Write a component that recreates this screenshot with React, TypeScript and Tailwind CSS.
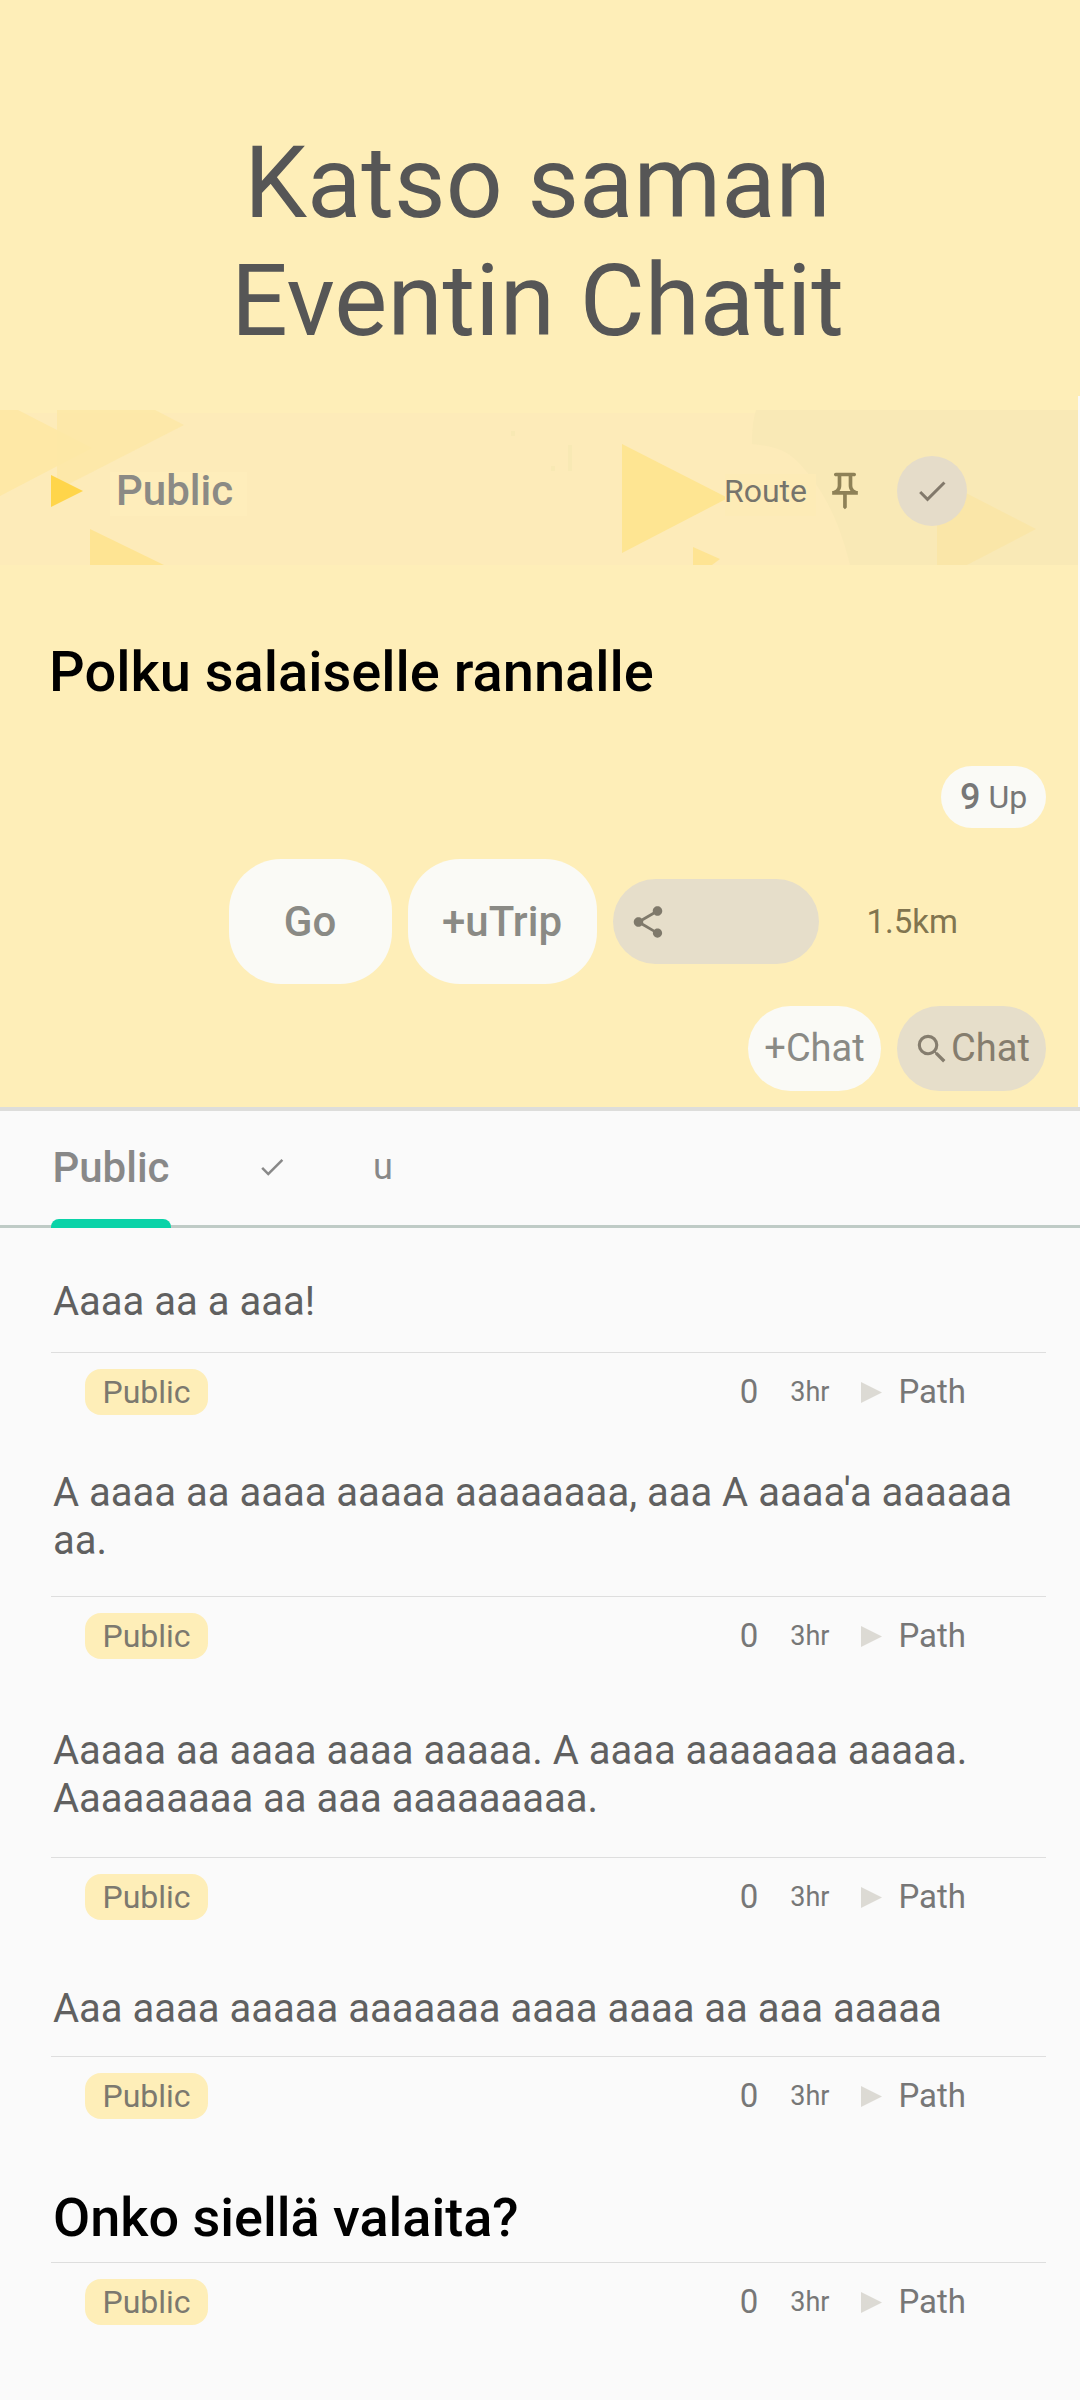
import React, { useState } from "react";
import { MdCheck, MdOutlinePushPin, MdSearch, MdShare } from "react-icons/md";

type Message = { text: string; space: string; strong?: boolean };

const messages: Message[] = [
  { text: "Aaaa aa a aaa!", space: "pt-[50px] pb-[26px]" },
  { text: "A aaaa aa aaaa aaaaa aaaaaaaa, aaa A aaaa'a aaaaaa aa.", space: "pt-[54px] pb-[31px]" },
  { text: "Aaaaa aa aaaa aaaa aaaaa. A aaaa aaaaaaa aaaaa. Aaaaaaaaa aa aaa aaaaaaaaa.", space: "pt-[68px] pb-[34px]" },
  { text: "Aaa aaaa aaaaa aaaaaaa aaaa aaaa aa aaa aaaaa", space: "pt-[65px] pb-[23px]" },
  { text: "Onko siellä valaita?", space: "pt-[67px] pb-3", strong: true },
];

function BannerArt() {
  return (
    <svg aria-hidden="true" viewBox="0 0 1078 155" preserveAspectRatio="none" className="absolute inset-0 w-full h-full">
      <rect y="3" width="1078" height="152" fill="#fdebb9" />
      <polygon points="0,0 18,0 92,38 0,86" fill="#fee8a6" />
      <polygon points="57,0 155,0 184,15 57,80" fill="#fde7a6" fillOpacity="0.85" />
      <polygon points="90,119 164,155 90,155" fill="#fee493" />
      <path d="M756 0H1078V155H850C841 118 826 80 796 50C787 41 775 36 752 34C752 20 753 10 756 0Z" fill="#f9e9b6" />
      <polygon points="622,34 728,88 622,143" fill="#fee592" />
      <polygon points="693,137 720,149 712,155 693,155" fill="#fee493" />
      <polygon points="937,70 966,83 1036,119 967,155 937,155" fill="#fae6a8" />
      <rect x="110" y="62" width="137" height="44" fill="#feedbb" />
      <rect x="725" y="64" width="91" height="42" fill="#fdebb6" />
      <path d="M570 35V61M553 56V61M513 21V26" stroke="#f8e9b4" strokeWidth="4" />
    </svg>
  );
}

function Play({ className }: { className: string }) {
  return (
    <svg aria-hidden="true" viewBox="0 0 32 32" preserveAspectRatio="none" className={className}>
      <polygon points="0,0 32,16 0,32" fill="currentColor" />
    </svg>
  );
}

function MessageItem({ message }: { message: Message }) {
  return (
    <li>
      <div className={`${message.space} border-b border-[#dedede] pl-[2px]`}>
        <p className={message.strong ? "text-[54px] leading-16 font-medium text-black" : "text-[40px] leading-12 text-[#606060]"}>
          {message.text}
        </p>
      </div>
      <div className="flex items-center pt-4 pl-[34px] pr-20 text-[33px] leading-10 text-[#777777]">
        <span className="flex h-[46px] w-[123px] items-center justify-center rounded-2xl bg-[#feeeb8] text-[32px] text-[#7c796f]">Public</span>
        <span className="ml-auto">0</span>
        <span className="ml-8 text-[27px]">3hr</span>
        <a href="#path" className="ml-8 flex items-center gap-4">
          <Play className="h-[21px] w-[21px] text-[#dcdad4]" />
          Path
        </a>
      </div>
    </li>
  );
}

export default function App() {
  const [tab, setTab] = useState("public");

  return (
    <div className="min-h-screen bg-[#fafafa] font-['Roboto',sans-serif]">
      <header className="bg-[#feeeb8] pt-[124px] pr-[5px] pb-9">
        <h1 className="mx-auto max-w-[700px] text-center text-[100px] leading-[118px] text-[#565656]">Katso saman Eventin Chatit</h1>
      </header>

      <section className="border-r-2 border-[#fafafa] bg-[#feeeb8]">
        <div className="pt-[14px]">
          <div className="relative h-[155px]">
            <BannerArt />
            <div className="relative flex h-full items-center pt-[6px] pl-[51px] pr-[111px]">
              <Play className="h-8 w-8 text-[#ffd54a]" />
              <span className="ml-[33px] text-[42px] font-medium text-[#8b8a85]">Public</span>
              <span className="ml-auto text-[32px] text-[#76746c]">Route</span>
              <button type="button" aria-label="Pin" className="ml-4 text-[#8e8157]"><MdOutlinePushPin size={44} /></button>
              <button type="button" aria-label="Done" className="ml-[30px] flex h-[70px] w-[70px] items-center justify-center rounded-full bg-[#e5dcc9] text-[#82796b]">
                <MdCheck size={36} />
              </button>
            </div>
          </div>
        </div>

        <h2 className="mt-[75px] pl-[49px] text-[56px] leading-16 font-medium text-black">Polku salaiselle rannalle</h2>

        <div className="mt-[62px] pr-8">
          <div className="flex justify-end">
            <button type="button" className="flex h-[62px] w-[105px] items-center justify-center gap-2 rounded-full bg-[#fafaf6] text-[32px] text-[#777777]">
              <b className="text-[36px] font-medium">9</b> Up
            </button>
          </div>

          <div className="mt-[31px] flex items-center justify-end gap-4 text-[42px] font-medium text-[#8a8a85]">
            <button type="button" className="h-[125px] w-[163px] rounded-[52px] bg-[#fafaf6]">Go</button>
            <button type="button" className="h-[125px] w-[189px] rounded-[52px] bg-[#fafaf6]">+uTrip</button>
            <button type="button" aria-label="Share" className="h-[85px] w-[206px] rounded-full bg-[#e6deca] pl-4 text-[#7f796b]">
              <MdShare size={38} />
            </button>
            <span className="ml-8 mr-[88px] text-[33px] font-normal text-[#81754f]">1.5km</span>
          </div>

          <div className="mt-[22px] flex justify-end gap-4 pb-4 text-[38px]">
            <button type="button" className="h-[85px] w-[133px] rounded-full bg-[#fafaf6] text-[#8a8a85]">+Chat</button>
            <button type="button" className="flex h-[85px] w-[149px] items-center justify-center rounded-full bg-[#e6deca] text-[#857d6e]">
              <MdSearch size={38} /> Chat
            </button>
          </div>
        </div>
      </section>

      <nav className="flex h-[121px] gap-[86px] border-t-4 border-b-3 border-t-[#dddddb] border-b-[#bfcbc6] pl-[51px] text-[#888888]">
        <button type="button" onClick={() => setTab("public")} className="relative w-[120px] pb-[2px] text-[42px] font-medium">
          Public
          {tab === "public" && <span className="absolute inset-x-0 -bottom-[3px] h-[9px] rounded-t-lg bg-[#0ad3a8]" />}
        </button>
        <button type="button" aria-label="Done" onClick={() => setTab("done")} className="relative pb-[2px]">
          <MdCheck size={30} />
          {tab === "done" && <span className="absolute inset-x-0 -bottom-[3px] h-[9px] rounded-t-lg bg-[#0ad3a8]" />}
        </button>
        <button type="button" onClick={() => setTab("u")} className="relative pb-[2px] text-[36px]">
          u
          {tab === "u" && <span className="absolute inset-x-0 -bottom-[3px] h-[9px] rounded-t-lg bg-[#0ad3a8]" />}
        </button>
      </nav>

      <ul className="pl-[51px] pr-[34px] pb-[76px]">
        {messages.map((m) => (
          <MessageItem key={m.text} message={m} />
        ))}
      </ul>
    </div>
  );
}
